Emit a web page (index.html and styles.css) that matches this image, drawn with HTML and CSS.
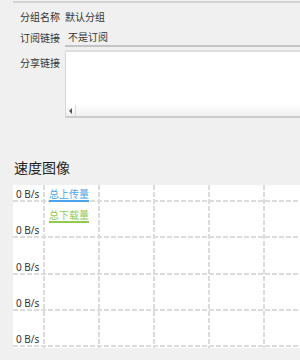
FILE: index.html
```html
<!DOCTYPE html>
<html lang="zh">
<head>
<meta charset="utf-8">
<link rel="stylesheet" href="styles.css">
</head>
<body>
<div class="page">
  <div class="topline"></div>
  <div class="row row-name">
    <span class="label">分组名称</span>
    <span class="value">默认分组</span>
  </div>
  <div class="row row-sub">
    <span class="label">订阅链接</span>
    <span class="value input">不是订阅</span>
  </div>
  <div class="share">
    <span class="label share-label">分享链接</span>
    <div class="textarea">
      <div class="ta-body"></div>
      <div class="hscroll">
        <span class="arrow"></span>
        <span class="sep"></span>
      </div>
    </div>
  </div>
  <h2 class="title">速度图像</h2>
  <div class="chart">
    <span class="ylabel r1">0 B/s</span>
    <span class="ylabel r2">0 B/s</span>
    <span class="ylabel r3">0 B/s</span>
    <span class="ylabel r4">0 B/s</span>
    <span class="ylabel r5">0 B/s</span>
    <span class="hline r2"></span>
    <span class="hline r3"></span>
    <span class="hline r4"></span>
    <span class="hline r5"></span>
    <span class="hline r6"></span>
    <span class="vline c2"></span>
    <span class="vline c3"></span>
    <span class="vline c4"></span>
    <span class="vline c5"></span>
    <span class="vline c6"></span>
    <div class="legend">
      <span class="legend-item up">总上传量</span>
      <span class="legend-item down">总下载量</span>
    </div>
  </div>
</div>
</body>
</html>
```

FILE: styles.css
```css
html, body {
  margin: 0;
  padding: 0;
}
body {
  background: #f0f0f0;
  font-family: "Noto Sans CJK SC", "Noto Sans", sans-serif;
  font-size: 10px;
  color: #333;
  width: 300px;
  height: 360px;
  overflow: hidden;
}
.topline {
  margin: 1px 0 0 13px;
  height: 2px;
  background: #d4d4d4;
}
.row {
  display: flex;
  align-items: center;
  padding-left: 20px;
}
.label {
  width: 45px;
  flex: none;
}
.row-name {
  margin-top: 3px;
  height: 21px;
}
.row-sub {
  height: 20px;
  align-items: stretch;
}
.row-sub .label {
  display: flex;
  align-items: center;
}
.value.input {
  flex: 1;
  display: flex;
  align-items: center;
  padding-left: 3px;
  border-bottom: 2px solid #c4c4c4;
}
.share {
  display: flex;
  align-items: flex-start;
  padding-left: 20px;
  margin-top: 3px;
}
.share-label {
  padding-top: 5px;
}
.textarea {
  flex: 1;
  height: 64px;
  display: flex;
  flex-direction: column;
  background: #fff;
  border-top: 2px solid #dedede;
  border-left: 1px solid #d8d8d8;
  border-bottom: 2px solid #cdcdcd;
}
.ta-body {
  flex: 1;
}
.hscroll {
  height: 11px;
  display: flex;
  align-items: center;
  background: linear-gradient(#ffffff, #efefef);
}
.arrow {
  margin-left: 3px;
  width: 0;
  height: 0;
  border-top: 3px solid transparent;
  border-bottom: 3px solid transparent;
  border-right: 3px solid #555;
}
.sep {
  margin-left: 3px;
  width: 1px;
  align-self: stretch;
  background: #dcdcdc;
}
.title {
  margin: 39px 0 0 0;
  padding-left: 14px;
  font-size: 14px;
  font-weight: normal;
  line-height: 20px;
  color: #222;
}
.chart {
  margin: 8px 0 0 13px;
  height: 163px;
  background: #fff;
  display: grid;
  grid-template-columns: 30px 55px 55px 55px 55px 1fr;
  grid-template-rows: 15px 36px 37px 36px 36px 3px;
}
.ylabel {
  grid-column: 1;
  align-self: end;
  padding-left: 3px;
  line-height: 12px;
  font-family: "Noto Sans", sans-serif;
  font-size: 10px;
  color: #333;
  white-space: nowrap;
}
.r1 { grid-row: 1; }
.r2 { grid-row: 2; }
.r3 { grid-row: 3; }
.r4 { grid-row: 4; }
.r5 { grid-row: 5; }
.r6 { grid-row: 6; }
.hline {
  grid-column: 1 / -1;
  align-self: start;
  height: 2px;
  background: repeating-linear-gradient(to right, #dcdcdc 0 5px, transparent 5px 7px);
}
.vline {
  grid-row: 1 / -1;
  justify-self: start;
  width: 2px;
  background: repeating-linear-gradient(to bottom, #dcdcdc 0 5px, transparent 5px 7px);
}
.c2 { grid-column: 2; }
.c3 { grid-column: 3; }
.c4 { grid-column: 4; }
.c5 { grid-column: 5; }
.c6 { grid-column: 6; }
.legend {
  grid-column: 2 / span 2;
  grid-row: 1 / span 3;
  z-index: 1;
  display: flex;
  flex-direction: column;
  align-items: flex-start;
  padding: 3px 0 0 6px;
}
.legend-item {
  font-size: 10px;
  line-height: 12px;
  border-bottom: 2px solid currentColor;
}
.legend-item.up {
  color: #4ba3ec;
}
.legend-item.down {
  color: #92c952;
  margin-top: 7px;
}
```
